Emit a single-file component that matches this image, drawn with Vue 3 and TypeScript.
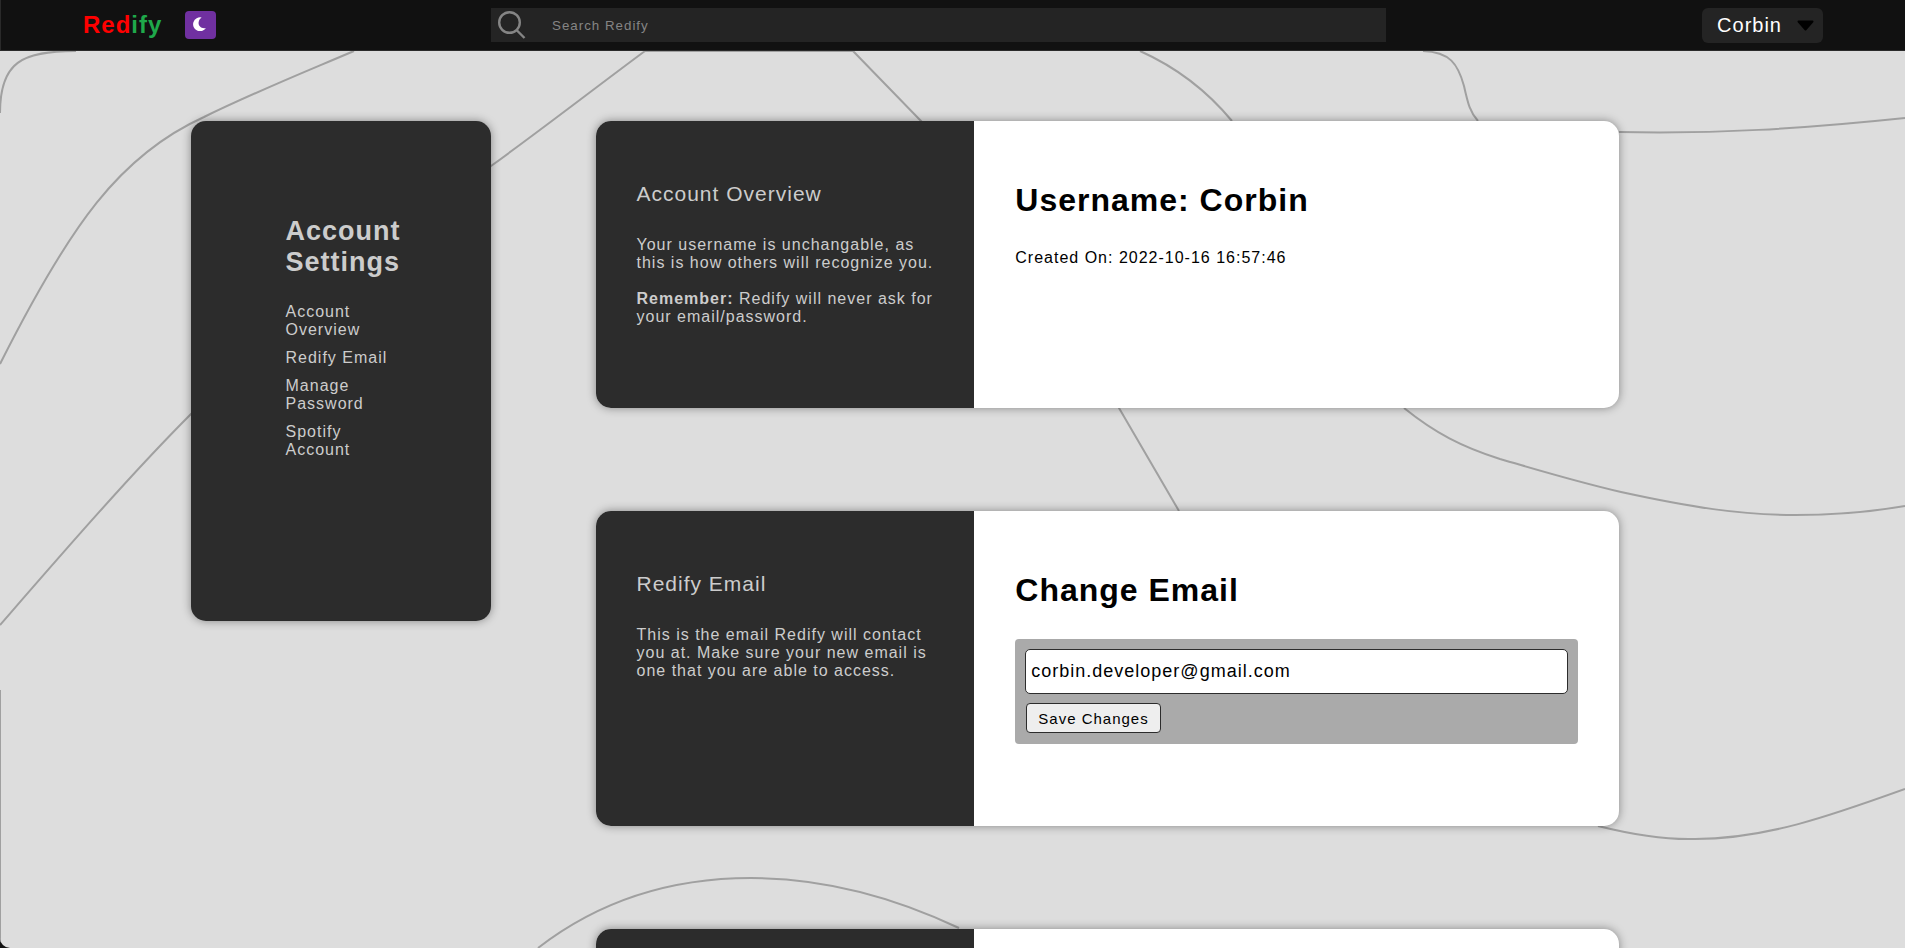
<script setup lang="ts">
import { ref } from 'vue'

interface NavLink {
  label: string
  target: string
}

const links: NavLink[] = [
  { label: 'Account Overview', target: '#overview' },
  { label: 'Redify Email', target: '#email' },
  { label: 'Manage Password', target: '#password' },
  { label: 'Spotify Account', target: '#spotify' },
]

const contours: string[] = [
  'M0 948 V690',
  'M0 113 C0 62 22 51 76 51',
  'M0 364 C70 225 120 155 204 117 C255 92 300 74 354 51',
  'M0 625 C60 556 130 475 191 414 C290 318 390 240 491 166 C545 127 595 88 645 51 H853',
  'M853 51 L921 121 C1000 205 1060 303 1119 408 L1179 511',
  'M1140 51 C1178 68 1208 92 1232 121',
  'M1404 408 C1435 433 1462 447 1500 459 C1545 472 1574 481 1621 492 C1690 507 1740 515 1795 515 C1840 515 1870 512 1905 506',
  'M1423 51 C1450 52 1458 64 1464 86 C1468 104 1470 112 1478 121',
  'M1619 132 C1715 134 1800 129 1905 118',
  'M1598 826 C1630 834 1662 840 1695 839 C1765 839 1830 816 1905 789',
  'M538 948 C600 900 670 878 751 878 C830 878 900 900 959 928',
]

const username = 'Corbin'
const query = ref<string>('')
const email = ref<string>('corbin.developer@gmail.com')
const menuOpen = ref<boolean>(false)
</script>

<template>
  <div class="page">
    <svg class="contours" viewBox="0 0 1905 948" preserveAspectRatio="none" aria-hidden="true">
      <path v-for="d in contours" :key="d" :d="d" />
    </svg>

    <header class="topbar">
      <div class="brand">
        <a class="logo" href="#"><span class="logo-red">Red</span><span class="logo-green">ify</span></a>
        <button class="theme" type="button" aria-label="Toggle dark mode">
          <svg width="14" height="14" viewBox="0 0 14 14" aria-hidden="true">
            <path d="M8.6 .4 A7 7 0 1 0 13 11 C8 12 5.2 8.8 5.6 5.4 C5.8 3.2 7 1.4 8.6 .4Z" fill="#fff" />
          </svg>
        </button>
      </div>

      <label class="search">
        <svg width="28" height="28" viewBox="0 0 28 28" aria-hidden="true">
          <circle cx="11.5" cy="11.5" r="10.3" />
          <path d="M18.5 19 L26.5 27" />
        </svg>
        <input v-model="query" type="search" placeholder="Search Redify" aria-label="Search Redify" />
      </label>

      <button class="account" type="button" :aria-expanded="menuOpen" @click="menuOpen = !menuOpen">
        {{ username }}
        <svg width="17" height="11" viewBox="0 0 17 11" aria-hidden="true">
          <path d="M1.5 1.5 H15.5 L8.5 9.5Z" />
        </svg>
      </button>
    </header>

    <main class="content">
      <nav class="sidebar" aria-label="Account Settings">
        <h2>Account Settings</h2>
        <ul>
          <li v-for="link in links" :key="link.target">
            <a :href="link.target">{{ link.label }}</a>
          </li>
        </ul>
      </nav>

      <div class="cards">
        <section id="overview" class="card">
          <div class="about">
            <h3>Account Overview</h3>
            <p>Your username is unchangable, as this is how others will recognize you.</p>
            <p><strong>Remember:</strong> Redify will never ask for your email/password.</p>
          </div>
          <div class="detail">
            <h1>Username: {{ username }}</h1>
            <p>Created On: 2022-10-16 16:57:46</p>
          </div>
        </section>

        <section id="email" class="card">
          <div class="about">
            <h3>Redify Email</h3>
            <p>This is the email Redify will contact you at. Make sure your new email is one that you are able to access.</p>
          </div>
          <div class="detail">
            <h1>Change Email</h1>
            <form @submit.prevent>
              <input v-model="email" type="email" aria-label="Email" />
              <button type="submit">Save Changes</button>
            </form>
          </div>
        </section>

        <section id="password" class="card">
          <div class="about"></div>
          <div class="detail"></div>
        </section>
      </div>
    </main>
  </div>
</template>

<style>
body {
  margin: 0;
  background: #111;
}
</style>

<style scoped>
.page {
  position: relative;
  display: flex;
  flex-direction: column;
  height: 100vh;
  overflow: hidden;
  background: #ddd;
  border-bottom-left-radius: 10px;
  font-family: "Liberation Sans", Arial, sans-serif;
  font-size: 16px;
  line-height: 18px;
  letter-spacing: 1px;
}

h1,
h2,
h3,
p,
ul {
  margin: 0;
  padding: 0;
}

button,
input {
  box-sizing: border-box;
  font-family: inherit;
  letter-spacing: inherit;
}

.contours {
  position: absolute;
  inset: 0;
  width: 100%;
  height: 100%;
  fill: none;
  stroke: #a0a0a0;
  stroke-width: 2;
}

/* Top bar */
.topbar {
  position: relative;
  display: grid;
  grid-template-columns: 408fr 895fr 437fr;
  align-items: center;
  flex: none;
  height: 50px;
  padding: 0 82px;
  background: #111;
  border-left: 1px solid #2a2a2a;
  border-bottom: 1px solid #2a2a2a;
}

.brand {
  display: flex;
  align-items: center;
  gap: 23px;
}

.logo {
  font-size: 24px;
  line-height: 28px;
  font-weight: bold;
  text-decoration: none;
}

.logo-red {
  color: #f00;
}

.logo-green {
  color: #1fa94b;
}

.theme {
  display: flex;
  align-items: center;
  justify-content: center;
  width: 31px;
  height: 28px;
  padding: 0 2px 2px 0;
  border: 0;
  border-radius: 4px;
  background: #7030a0;
}

.search {
  display: flex;
  align-items: center;
  gap: 26px;
  height: 34px;
  padding-left: 7px;
  background: #242424;
}

.search svg {
  flex: none;
  fill: none;
  stroke: #858585;
  stroke-width: 2.4;
}

.search input {
  flex: 1;
  min-width: 0;
  height: 100%;
  padding: 0;
  border: 0;
  outline: 0;
  background: transparent;
  color: #ccc;
  appearance: none;
}

.search input::placeholder {
  color: #858585;
  opacity: 1;
}

.account {
  display: flex;
  align-items: center;
  justify-self: end;
  gap: 15px;
  height: 35px;
  padding: 0 9px 0 15px;
  border: 0;
  border-radius: 6px;
  background: #242424;
  color: #fff;
  font-size: 20px;
}

.account path {
  fill: #000;
  stroke: #000;
  stroke-width: 2;
  stroke-linejoin: round;
}

/* Page body */
.content {
  position: relative;
  display: grid;
  grid-template-columns: 300px minmax(0, 1fr);
  align-items: start;
  gap: 105px;
  flex: 1;
  min-height: 0;
  padding: 70px 15% 70px 10%;
  overflow-y: auto;
  scrollbar-width: none;
}

.sidebar,
.card {
  border-radius: 15px;
  box-shadow: 0 0 10px rgba(0, 0, 0, 0.4);
}

.sidebar {
  box-sizing: border-box;
  min-height: 500px;
  padding: 95px;
  background: #2c2c2c;
  color: #ccc;
}

.sidebar h2 {
  margin-bottom: 25px;
  font-size: 27px;
  line-height: 31px;
}

.sidebar ul {
  display: grid;
  gap: 10px;
  list-style: none;
}

.sidebar a {
  color: inherit;
  text-decoration: none;
}

.cards {
  display: grid;
  gap: 103px;
}

.card {
  display: grid;
  grid-template-columns: 37% 63%;
  min-height: 287px;
  background: #fff;
  overflow: hidden;
}

.about,
.detail {
  padding: 61px 41px 82px;
}

.about {
  background: #2c2c2c;
  color: #ccc;
}

.about h3 {
  margin-bottom: 30px;
  font-size: 21px;
  line-height: 24px;
  font-weight: normal;
}

.about p + p {
  margin-top: 18px;
}

.detail {
  color: #000;
}

.detail h1 {
  margin-bottom: 30px;
  font-size: 32px;
  line-height: 37px;
}

form {
  display: flex;
  flex-direction: column;
  align-items: flex-start;
  gap: 9px;
  padding: 10px 10px 11px;
  border-radius: 4px;
  background: #aaa;
}

form input {
  width: 100%;
  height: 45px;
  padding: 0 5px;
  border: 1px solid #2c2c2c;
  border-radius: 5px;
  background: #fff;
  color: #000;
  font-size: 18px;
}

form button {
  height: 30px;
  margin-left: 1px;
  padding: 0 11px;
  border: 1px solid #2c2c2c;
  border-radius: 4px;
  background: #eee;
  color: #000;
  font-size: 15px;
}
</style>
